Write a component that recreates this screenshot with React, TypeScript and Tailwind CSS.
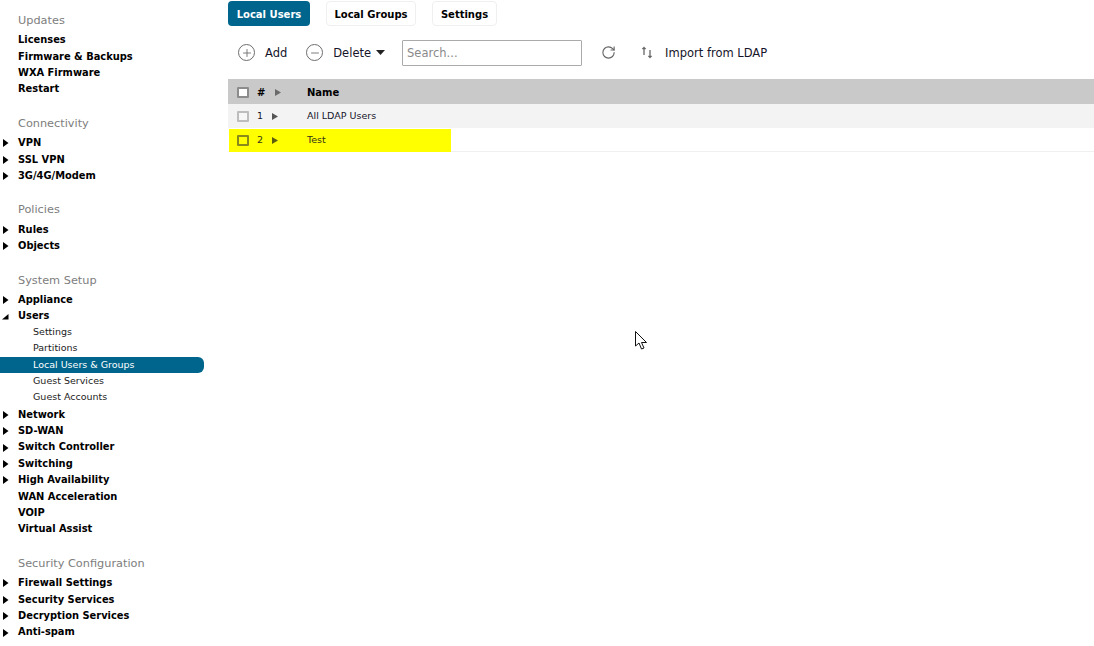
import React from "react";
import { Plus, Minus, RotateCw } from "lucide-react";

const font = { fontFamily: '"DejaVu Sans", Verdana, sans-serif' };

type Item = { label: string; arrow?: "right" | "down"; sub?: boolean; active?: boolean };
type Section = { title: string; items: Item[] };

const sections: Section[] = [
  {
    title: "Updates",
    items: [{ label: "Licenses" }, { label: "Firmware & Backups" }, { label: "WXA Firmware" }, { label: "Restart" }],
  },
  {
    title: "Connectivity",
    items: [
      { label: "VPN", arrow: "right" },
      { label: "SSL VPN", arrow: "right" },
      { label: "3G/4G/Modem", arrow: "right" },
    ],
  },
  {
    title: "Policies",
    items: [
      { label: "Rules", arrow: "right" },
      { label: "Objects", arrow: "right" },
    ],
  },
  {
    title: "System Setup",
    items: [
      { label: "Appliance", arrow: "right" },
      { label: "Users", arrow: "down" },
      { label: "Settings", sub: true },
      { label: "Partitions", sub: true },
      { label: "Local Users & Groups", sub: true, active: true },
      { label: "Guest Services", sub: true },
      { label: "Guest Accounts", sub: true },
      { label: "Network", arrow: "right" },
      { label: "SD-WAN", arrow: "right" },
      { label: "Switch Controller", arrow: "right" },
      { label: "Switching", arrow: "right" },
      { label: "High Availability", arrow: "right" },
      { label: "WAN Acceleration" },
      { label: "VOIP" },
      { label: "Virtual Assist" },
    ],
  },
  {
    title: "Security Configuration",
    items: [
      { label: "Firewall Settings", arrow: "right" },
      { label: "Security Services", arrow: "right" },
      { label: "Decryption Services", arrow: "right" },
      { label: "Anti-spam", arrow: "right" },
    ],
  },
];

function Arrow({ dir }: { dir?: "right" | "down" }) {
  if (dir === "right") {
    return (
      <svg width="6" height="8" viewBox="0 0 6 8" className="absolute left-[3px] top-[5px]">
        <path d="M0 0 L5.5 4 L0 8 Z" fill="#000" />
      </svg>
    );
  }
  if (dir === "down") {
    return (
      <svg width="7" height="6" viewBox="0 0 7 6" className="absolute left-[2px] top-[6px]">
        <path d="M6.5 0 V5.5 H0 Z" fill="#000" />
      </svg>
    );
  }
  return null;
}

function NavRow({ item }: { item: Item }) {
  if (item.sub) {
    return (
      <div
        className={`h-[16.4px] flex items-center pl-[33px] pb-[1px] text-[9.5px] leading-none rounded-r-[6px] ${
          item.active ? "bg-[#00658c] text-white" : "text-[#1c1c1c]"
        }`}
      >
        {item.label}
      </div>
    );
  }
  return (
    <div className="relative h-[16.4px] flex items-center pl-[18px] pt-[1px] text-[9.9px] font-bold leading-none text-black">
      <Arrow dir={item.arrow} />
      {item.label}
    </div>
  );
}

function Sidebar() {
  return (
    <aside className="w-[204px] shrink-0 pt-[8.5px]">
      {sections.map((s) => (
        <div key={s.title} className="mb-[14.4px]">
          <div className="h-[23px] pl-[18px] pt-[1px] flex items-center text-[11.3px] leading-none text-[#7d7d7d]">
            {s.title}
          </div>
          {s.items.map((i) => (
            <NavRow key={i.label} item={i} />
          ))}
        </div>
      ))}
    </aside>
  );
}

function Tab({ label, active, w }: { label: string; active?: boolean; w: string }) {
  return (
    <div
      className={`${w} h-[25px] flex items-center justify-center pt-[1px] rounded-[4px] text-[10px] font-bold ${
        active ? "bg-[#00658c] text-white" : "bg-white text-black border border-[#efefef]"
      }`}
    >
      {label}
    </div>
  );
}

function Check({ tone }: { tone: "head" | "row" | "yellow" }) {
  const cls =
    tone === "head"
      ? "bg-white border-[#8c8c8c]"
      : tone === "row"
        ? "bg-[#f6f6f6] border-[#bdbdbd]"
        : "bg-[#ffff00] border-[#8a8a1a]";
  return <div className={`w-[12px] h-[11px] border-2 rounded-[1px] ${cls}`} />;
}

function SmallArrow({ color }: { color: string }) {
  return (
    <svg width="6" height="7" viewBox="0 0 6 7">
      <path d="M0 0 L6 3.5 L0 7 Z" fill={color} />
    </svg>
  );
}

function CircleIcon({ minus }: { minus?: boolean }) {
  const Icon = minus ? Minus : Plus;
  return (
    <div className="w-[17px] h-[17px] rounded-full border-[1.5px] border-[#6d6d6d] flex items-center justify-center">
      <Icon size={12} strokeWidth={1.8} color="#6d6d6d" />
    </div>
  );
}

function SortIcon() {
  return (
    <svg width="12" height="13" viewBox="0 0 12 13" fill="#666" stroke="#666" strokeWidth="1.3">
      <path d="M3 9 V2" fill="none" />
      <path d="M1 3 L3 0.8 L5 3 Z" strokeWidth="0.4" />
      <path d="M9 4 V11" fill="none" />
      <path d="M7 10 L9 12.2 L11 10 Z" strokeWidth="0.4" />
    </svg>
  );
}

function Cursor() {
  return (
    <svg width="14" height="20" viewBox="0 0 14 20" className="absolute left-[635px] top-[331px]">
      <path
        d="M0.5 0.5 V15 L4 12 L6.5 18 L9 17 L6.5 11.5 L11.5 11.5 Z"
        fill="#fff"
        stroke="#111"
        strokeWidth="1"
      />
    </svg>
  );
}

export default function App() {
  return (
    <div className="relative flex w-[1094px] h-[646px] overflow-hidden bg-white" style={font}>
      <Sidebar />
      <main className="flex-1 ml-[24px] pt-[1px]">
        <div className="flex gap-[16px]">
          <Tab label="Local Users" active w="w-[82px]" />
          <Tab label="Local Groups" w="w-[90px]" />
          <Tab label="Settings" w="w-[65px]" />
        </div>

        <div className="h-[53px] flex items-center text-[11.5px] text-[#15152a]">
          <div className="ml-[10px]">
            <CircleIcon />
          </div>
          <span className="ml-[10px] pt-[3px]">Add</span>
          <div className="ml-[19px]">
            <CircleIcon minus />
          </div>
          <span className="ml-[10px] pt-[3px]">Delete</span>
          <svg width="9" height="5" viewBox="0 0 9 5" className="ml-[5px]">
            <path d="M0 0 H9 L4.5 5 Z" fill="#222" />
          </svg>
          <div className="ml-[17px] w-[180px] h-[26px] border border-[#aaaaaa] rounded-[1px] flex items-center pl-[4px] pt-[2px] text-[#8a8a8a] text-[11.5px]">
            Search...
          </div>
          <RotateCw size={15} strokeWidth={1.8} color="#666" className="ml-[19px]" />
          <div className="ml-[25px]">
            <SortIcon />
          </div>
          <span className="ml-[12px] pt-[3px]">Import from LDAP</span>
        </div>

        <div className="h-[25px] pt-[1px] bg-[#c9c9c9] flex items-center text-[10px] font-bold text-black">
          <div className="w-[29px] pl-[9px]">
            <Check tone="head" />
          </div>
          <div className="w-[18px]">#</div>
          <div className="w-[32px]">
            <SmallArrow color="#6a6a6a" />
          </div>
          <div>Name</div>
        </div>

        <div className="h-[24px] bg-[#f3f3f3] flex items-center text-[9.5px] text-[#15152a]">
          <div className="w-[29px] pl-[9px]">
            <Check tone="row" />
          </div>
          <div className="w-[15px]">1</div>
          <div className="w-[35px]">
            <SmallArrow color="#555" />
          </div>
          <div className="pt-[1px]">All LDAP Users</div>
        </div>

        <div className="h-[24px] border-b border-[#f0f0f0] flex">
          <div className="w-[222px] ml-[1px] mt-[1px] h-[23px] bg-[#ffff00] flex items-center text-[9.5px] text-[#33331a]">
            <div className="w-[28px] pl-[8px]">
              <Check tone="yellow" />
            </div>
            <div className="w-[15px]">2</div>
            <div className="w-[35px]">
              <SmallArrow color="#5c5c10" />
            </div>
            <div>Test</div>
          </div>
        </div>
      </main>
      <Cursor />
    </div>
  );
}
